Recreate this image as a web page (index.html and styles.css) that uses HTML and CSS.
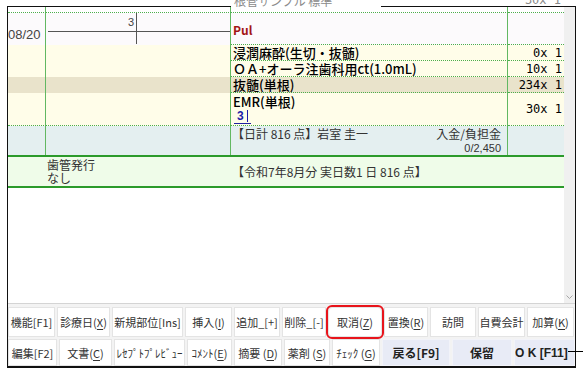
FILE: index.html
```html
<html>
<head>
    <title>Treatment record</title>
<link rel="stylesheet" href="styles.css">
</head>
<body>

<div class="screen">

  <div class="peek">
    <span class="peek-name"><span>根管サンプル 標準</span></span>
    <span class="peek-num"><span>30x 1</span></span>
  </div>

  <div class="frame">
    <div class="main">
      <div class="sheet">

        <div class="row r0">
          <div class="c c1 dot"></div><div class="c c2 dot"></div><div class="c c3 dot"></div><div class="c c4 dot"></div>
        </div>

        <div class="row r1">
          <div class="c c1 date">08/20</div>
          <div class="c c2">
            <div class="tooth">
              <span class="tq tl">3</span><span class="tq tr"></span>
              <span class="tq bl"></span><span class="tq br"></span>
            </div>
          </div>
          <div class="c c3 dot pul">Pul</div>
          <div class="c c4 dot"></div>
        </div>

        <div class="row line yellow">
          <div class="c c1"></div><div class="c c2"></div>
          <div class="c c3 dot name">浸潤麻酔(生切・抜髄)</div>
          <div class="c c4 dot num">0x 1</div>
        </div>

        <div class="row line yellow">
          <div class="c c1"></div><div class="c c2"></div>
          <div class="c c3 dot name">ＯＡ+オーラ注歯科用ct(1.0mL)</div>
          <div class="c c4 dot num">10x 1</div>
        </div>

        <div class="row line tan">
          <div class="c c1"></div><div class="c c2"></div>
          <div class="c c3 dot name">抜髄(単根)</div>
          <div class="c c4 dot num">234x 1</div>
        </div>

        <div class="row r5 yellow">
          <div class="c c1 dot"></div><div class="c c2 dot"></div>
          <div class="c c3 dot name stack">
            <span>EMR(単根)</span>
            <span><span class="inp">3</span></span>
          </div>
          <div class="c c4 dot num">30x 1</div>
        </div>

        <div class="row r6">
          <div class="c c1"></div><div class="c c2"></div>
          <div class="c c3 total">
            <div class="total-top"><span>【日計 816 点】岩室 圭一</span><span>入金/負担金</span></div>
            <div class="total-sub">0/2,450</div>
          </div>
          <div class="c c4"></div>
        </div>

        <div class="row r7">
          <div class="c c1"></div>
          <div class="c c2 note"><span>歯管発行</span><span>なし</span></div>
          <div class="c c3 month">【令和7年8月分 実日数1 日 816 点】</div>
          <div class="c c4"></div>
        </div>

      </div>
      <div class="scroll">
        <svg width="7" height="5" viewBox="0 0 7 5"><polyline points="0.5,0.5 3.5,3.5 6.5,0.5" fill="none" stroke="#a6a6a6" stroke-width="1"/></svg>
      </div>
    </div>

    <div class="keys">
      <div class="keyrow k1">
        <div class="key">機能[F1]</div>
        <div class="key">診療日(<u>X</u>)</div>
        <div class="key">新規部位[Ins]</div>
        <div class="key">挿入(<u>I</u>)</div>
        <div class="key">追加_[+]</div>
        <div class="key">削除_[-]</div>
        <div class="key hl">取消(<u>Z</u>)</div>
        <div class="key">置換(<u>R</u>)</div>
        <div class="key">訪問</div>
        <div class="key">自費会計</div>
        <div class="key">加算(<u>K</u>)</div>
      </div>
      <div class="keyrow k2">
        <div class="key">編集[F2]</div>
        <div class="key">文書(<u>C</u>)</div>
        <div class="key">ﾚｾﾌﾟﾄﾌﾟﾚﾋﾞｭｰ</div>
        <div class="key">ｺﾒﾝﾄ(<u>E</u>)</div>
        <div class="key">摘要 (<u>D</u>)</div>
        <div class="key">薬剤 (<u>S</u>)</div>
        <div class="key">ﾁｪｯｸ (<u>G</u>)</div>
        <div class="key main-key">戻る[F9]</div>
        <div class="key main-key">保留</div>
        <div class="key main-key ok">O K [F11]</div>
      </div>
    </div>
  </div>

</div>

</body>
</html>
```

FILE: styles.css
```css
body {
    margin: 0;
    background: #fff;
    font-family: "Noto Sans CJK JP", sans-serif;
    color: #111;
}

.screen {
    position: relative;
    width: 583px;
    height: 373px;
    overflow: hidden;
}

.screen::after {
    content: "";
    position: absolute;
    left: 568px;
    top: 351px;
    width: 15px;
    height: 1px;
    background: #000;
}

/* the row above, scrolled almost out of view */
.peek {
    position: relative;
    height: 6px;
    margin-left: 8px;
    width: 556px;
    display: grid;
    grid-template-columns: 223px 277px 56px;
    color: #8a8a8a;
    font-size: 12px;
    line-height: 12px;
}

.peek-name {
    position: absolute;
    left: 223px;
    top: 0;
    z-index: 1;
    width: 150px;
    height: 9px;
    overflow: hidden;
    background: #fff;
}

.peek-name span {
    display: block;
    margin-top: -5px;
    padding-left: 3px;
}

.peek-num {
    grid-column: 3;
    height: 6px;
    overflow: hidden;
    text-align: right;
    padding-right: 3px;
    font-family: "DejaVu Sans Mono", monospace;
}

.peek-num span {
    display: block;
    margin-top: -6px;
}

.frame {
    width: 569px;
    margin-left: 7px;
    box-sizing: border-box;
    border: 1px solid #111;
    border-bottom-width: 2px;
}

.main {
    display: flex;
    height: 296px;
}

.sheet {
    width: 556px;
}

.scroll {
    width: 11px;
    background: #f0f0f0;
    display: flex;
    flex-direction: column;
    justify-content: flex-end;
    align-items: center;
    padding-bottom: 3px;
    box-sizing: border-box;
}

/* sheet rows */
.row {
    display: grid;
    grid-template-columns: 38px 185px 277px 56px;
}

.c {
    box-sizing: border-box;
    border-right: 1px solid #62b862;
    min-width: 0;
}

.c4 {
    border-right: none;
}

.dot {
    border-bottom: 1px dotted #4cae4c;
}

.r0 {
    height: 6px;
}

.r1 {
    height: 32px;
    background: #fcfafc;
}

.line {
    height: 16px;
}

.r5 {
    height: 33px;
}

.yellow {
    background: #fffde9;
}

.tan {
    background: #e9e3cb;
}

.date {
    align-self: stretch;
    display: flex;
    align-items: flex-end;
    padding-bottom: 3px;
    font-family: "Liberation Sans", sans-serif;
    font-size: 13px;
    line-height: 15px;
    color: #444;
}

.tooth {
    margin-left: 2px;
    display: grid;
    grid-template-columns: 89px 1fr;
    grid-template-rows: 19px 12px;
}

.tq {
    box-sizing: border-box;
}

.tl {
    border-right: 1px solid #555;
    border-bottom: 1px solid #555;
    text-align: right;
    padding-right: 2px;
    font-family: "Liberation Sans", sans-serif;
    font-size: 11px;
    line-height: 18px;
    color: #444;
}

.tr {
    border-bottom: 1px solid #555;
}

.bl {
    border-right: 1px solid #555;
}

.pul {
    padding: 9px 0 0 2px;
    color: #a31515;
    font-weight: bold;
    font-size: 12px;
    line-height: 15px;
}

.name {
    padding-left: 2px;
    font-size: 13px;
    font-weight: 500;
    line-height: 15px;
    color: #000;
    white-space: nowrap;
}

.stack {
    display: flex;
    flex-direction: column;
    padding-top: 1px;
}

.inp {
    display: inline-block;
    margin-left: 1px;
    padding: 0 3px 0 3px;
    border-bottom: 1px solid #2020a0;
    color: #1c1ca8;
    font-weight: bold;
    font-family: "Liberation Sans", sans-serif;
    font-size: 12px;
    line-height: 14px;
}

.inp::after {
    content: "";
    display: inline-block;
    width: 1px;
    height: 12px;
    margin-left: 3px;
    vertical-align: -2px;
    background: #1c1ca8;
}

.num {
    display: flex;
    align-items: center;
    justify-content: flex-end;
    padding-right: 2px;
    font-family: "DejaVu Sans Mono", monospace;
    font-size: 12px;
    color: #000;
}

.r6 {
    height: 31px;
    background: #e4eff0;
    border-bottom: 2px solid #2b9a2b;
    box-sizing: border-box;
}

.total {
    padding: 0 6px 0 1px;
    font-size: 12px;
    line-height: 15px;
    color: #333;
}

.total-top {
    display: flex;
    justify-content: space-between;
}

.total-sub {
    text-align: right;
    font-family: "Liberation Sans", sans-serif;
    font-size: 11px;
    line-height: 14px;
}

.r7 {
    height: 31px;
    background: #effce9;
    border-bottom: 2px solid #2b9a2b;
    box-sizing: border-box;
}

.r7 .c {
    border-right-color: transparent;
}

.note {
    display: flex;
    flex-direction: column;
    padding: 1px 0 0 1px;
    font-size: 12px;
    line-height: 13px;
    color: #333;
}

.month {
    display: flex;
    align-items: center;
    padding-left: 1px;
    font-size: 12px;
    color: #333;
    white-space: nowrap;
}

/* function keys */
.keys {
    border-top: 1px solid #d4d4d4;
    padding-top: 3px;
    background: #f3f3f3;
    display: flex;
    flex-direction: column;
    gap: 2px;
}

.keyrow {
    display: grid;
    gap: 2px;
}

.k1 {
    height: 30px;
    grid-template-columns: 47px 53px 71px 47px 46px 44px 54px 44px 46px 47px 47px;
}

.k2 {
    height: 27px;
    grid-template-columns: 49px 53px 71px 45px 48px 46px 48px 68px 60px 61px;
}

.key {
    box-sizing: border-box;
    background: #fff;
    border: 1px solid #e4e4e4;
    display: flex;
    align-items: center;
    justify-content: center;
    font-size: 11px;
    color: #333;
    white-space: nowrap;
    overflow: hidden;
}

.key u {
    text-underline-offset: 2px;
}

.hl {
    outline: 2px solid #e8141b;
    outline-offset: 0;
    border-radius: 4px;
    overflow: visible;
}

.main-key {
    background: #e8ebf6;
    border-color: #f2f3f9;
    font-weight: bold;
    font-size: 12px;
    color: #222;
}

.ok {
    font-family: "Liberation Sans", sans-serif;
    font-size: 12px;
    justify-content: flex-start;
    padding-left: 0;
}
```
